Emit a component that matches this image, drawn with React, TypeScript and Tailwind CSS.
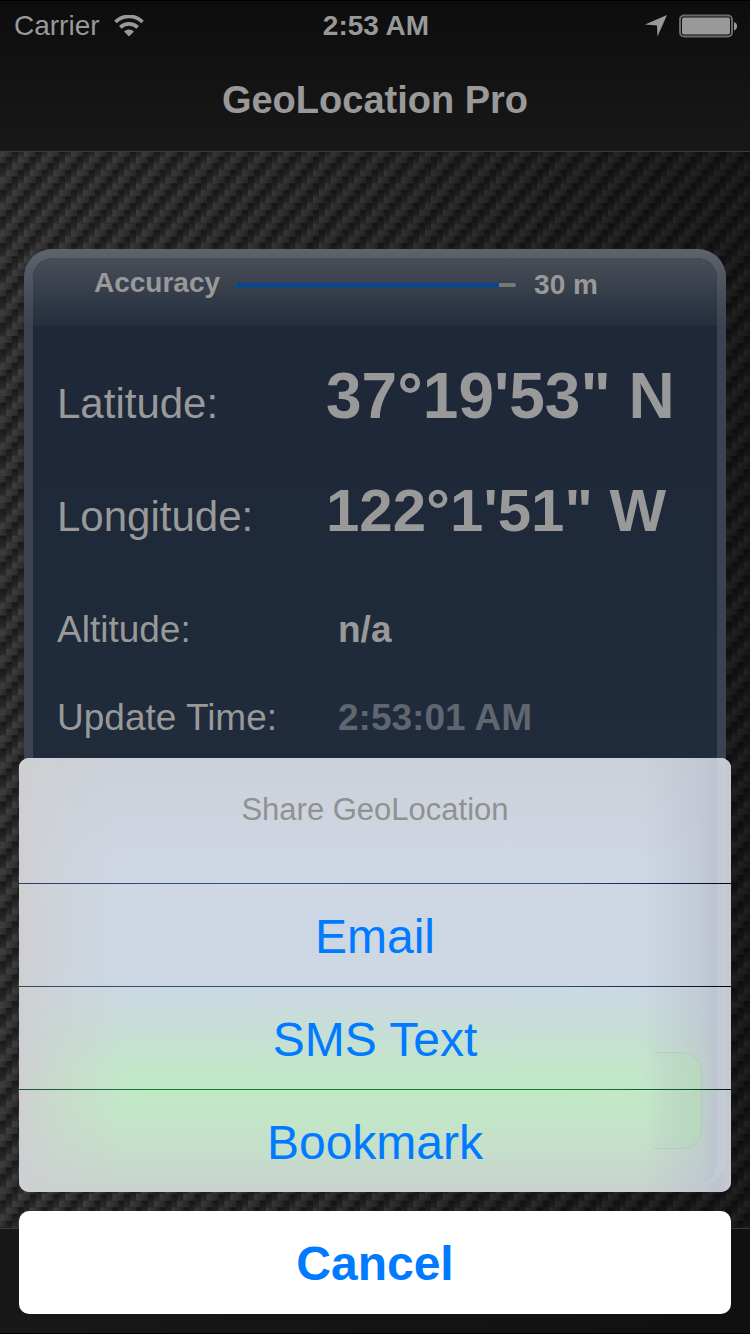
const shareOptions = ["Email", "SMS Text", "Bookmark"]

const dividers = [
  "bg-[linear-gradient(to_right,#2f3f66,#2d5585_30%,#2d5080_75%,#0a1a4c_92%,#00040c)]",
  "bg-[linear-gradient(to_right,#34466c,#27557f_30%,#27557f_75%,#0a1f4c_92%,#00040c)]",
  "bg-[linear-gradient(to_right,#1f5040,#12842e_20%,#12842e_75%,#0d5a26_94%,#03120c)]",
]

function CarbonTexture() {
  // 4x4 weave, every row is shifted one cell to the left
  const rows = [-1, 0, 1, 2, 3]
  return (
    <svg className="absolute inset-0 h-full w-full" aria-hidden="true">
      <defs>
        <linearGradient id="across">
          <stop offset="0" stopColor="#434343" />
          <stop offset="1" stopColor="#2b2b2b" />
        </linearGradient>
        <linearGradient id="down" x1="0" y1="0" x2="0" y2="1">
          <stop offset="0" stopColor="#181818" />
          <stop offset="1" stopColor="#303030" />
        </linearGradient>
        <linearGradient id="shade">
          <stop offset="0" stopColor="#000" stopOpacity="0.04" />
          <stop offset="0.5" stopColor="#000" stopOpacity="0.22" />
          <stop offset="1" stopColor="#000" stopOpacity="0.5" />
        </linearGradient>
        <pattern id="carbon" x="18" y="156.7" width="23.6" height="26.6" patternUnits="userSpaceOnUse">
          <rect width="24" height="27" fill="#222" />
          {rows.map((r) =>
            [-23.6, 0, 23.6, 47.2].map((dx) => (
              <g key={`${r}${dx}`} transform={`translate(${dx - r * 5.9} ${r * 6.65})`}>
                <rect width="11.8" height="6.65" fill="url(#across)" />
                <rect x="11.8" width="5.9" height="13.3" fill="url(#down)" />
              </g>
            ))
          )}
        </pattern>
      </defs>
      <rect width="100%" height="100%" fill="url(#carbon)" />
      <rect width="100%" height="100%" fill="url(#shade)" />
    </svg>
  )
}

function StatusBar() {
  return (
    <div className="grid h-[50px] grid-cols-3 items-center pr-3 pl-3.5 text-[28px]">
      <div className="flex items-center gap-3.5">
        <span>Carrier</span>
        <svg width="30" height="22" viewBox="0 0 30 22" fill="none" stroke="currentColor" strokeWidth="3.8" aria-label="Wi-Fi">
          <path d="M1.5 7a19.2 19.2 0 0 1 27 0" />
          <path d="M6.3 12.4a12.4 12.4 0 0 1 17.4 0" />
          <path d="M10 16.6a7 7 0 0 1 10 0L15 21.6z" fill="currentColor" stroke="none" />
        </svg>
      </div>
      <span className="text-center font-bold">2:53 AM</span>
      <div className="flex items-center justify-end gap-3">
        <svg width="22" height="22" viewBox="0 0 22 22" fill="currentColor" aria-label="Location">
          <path d="M22 0 12.5 21.5 12 10.6 0 9.6z" />
        </svg>
        <svg width="59" height="24" viewBox="0 0 59 24" aria-label="Battery">
          <rect x="1" y="1.5" width="52" height="21" rx="4" fill="none" stroke="#6b6b6b" strokeWidth="2" />
          <rect x="3" y="3.5" width="48" height="17" rx="2" fill="currentColor" />
          <path d="M55 8a4.5 4.5 0 0 1 0 8.5z" fill="currentColor" />
        </svg>
      </div>
    </div>
  )
}

function Reading({ label, value, dim }: { label: string; value: string; dim?: boolean }) {
  return (
    <div className="flex h-[88px] items-center text-[37px]">
      <dt className="w-[281px]">{label}</dt>
      <dd className={dim ? "font-bold text-[#5f666f]" : "font-bold"}>{value}</dd>
    </div>
  )
}

export default function App() {
  return (
    <div className="relative flex min-h-screen flex-col overflow-hidden bg-[#222] font-['Liberation_Sans',Arial,sans-serif] text-[#999]">
      <CarbonTexture />

      <header className="relative h-[152px] border-t border-b border-t-black border-b-[#3a3a3a] bg-linear-to-b from-[#0d0d0d] to-[#181818]">
        <StatusBar />
        <h1 className="text-center text-[38px] leading-[98px] font-bold">GeoLocation Pro</h1>
      </header>

      <main className="relative flex flex-1 flex-col px-6 pt-[97px] pb-[42px]">
        <section className="flex flex-1 flex-col rounded-[28px] bg-[linear-gradient(#5e646e,#4b515c_40px,#3b4350_77px)] p-[9px]">
          <div className="flex-1 overflow-hidden rounded-[20px] bg-linear-to-b from-[#1d2738] to-[#222e3e]">
            <div className="flex h-[68px] items-start bg-linear-to-b from-[#494d58] to-[#232f3d] pt-[7px] pl-[61px] text-[28px] leading-9 font-bold">
              <span id="accuracy">Accuracy</span>
              <div
                role="progressbar"
                aria-labelledby="accuracy"
                aria-valuenow={94}
                className="mt-[18px] ml-[15px] h-1 w-[281px] overflow-hidden rounded-full bg-[#777]"
              >
                <div className="h-full w-[94%] bg-[#00499a]" />
              </div>
              <span className="ml-[18px] pt-0.5">30 m</span>
            </div>

            <dl className="pt-[13px] pl-6">
              <div className="flex h-[114px] items-baseline leading-[114px]">
                <dt className="w-[269px] text-[42px]">Latitude:</dt>
                <dd className="text-[64px] font-bold">37°19'53" N</dd>
              </div>
              <div className="mb-[17px] flex h-[116px] items-baseline leading-[116px]">
                <dt className="w-[269px] text-[42px]">Longitude:</dt>
                <dd className="text-[60px] font-bold">122°1'51" W</dd>
              </div>
              <Reading label="Altitude:" value="n/a" />
              <Reading label="Update Time:" value="2:53:01 AM" dim />
            </dl>
          </div>
        </section>
      </main>

      <footer className="relative h-[106px] border-t border-b border-t-[#3a3a3a] border-b-black bg-linear-to-r from-[#181818] to-[#101010]" />

      <div role="dialog" aria-labelledby="share" className="absolute inset-x-0 bottom-0 flex flex-col gap-[19px] px-[19px] pb-5">
        <div className="relative overflow-hidden rounded-[10px] bg-[linear-gradient(#cbd1d9,#cfd7e4_25%,#ccd8e3_52%,#c6dfd4_64%,#c2e8c8_74%,#c2e7c6_82%,#c5dfcb_90%,#c8d2ce)]">
          <div className="absolute inset-0 bg-[linear-gradient(to_right,#cecfd2,#cecfd288_5%,#cecfd200_15%),linear-gradient(to_left,#c4c8cf_5px,#bcc3cf_14px,#bcc3cfa0_30px,#bcc3cf00_90px)]" />
          {/* edges of the panel and its button showing through */}
          <div className="absolute right-[5px] bottom-[6px] h-[428px] w-40 rounded-br-[28px] border-r-[9px] border-[#c8d4de]/40" />
          <div className="absolute right-[29px] bottom-[43px] h-[97px] w-12 rounded-r-[20px] border border-l-0 border-[#a8bcac]/40 bg-linear-to-r from-[#b6dfba]/0 to-[#b6dcb9]/70" />

          <h2 id="share" className="relative h-[125px] pt-8 text-center text-[31px] leading-10 text-[#919191]">
            Share GeoLocation
          </h2>
          {shareOptions.map((option, i) => (
            <div key={option} className="relative">
              <div className={`h-px ${dividers[i]}`} />
              <button className="h-[102px] w-full pt-1 text-[48px] text-[#007aff]">{option}</button>
            </div>
          ))}
        </div>
        <button className="h-[103px] rounded-[10px] bg-white pt-0.5 text-[48px] font-bold text-[#007aff]">Cancel</button>
      </div>
    </div>
  )
}
